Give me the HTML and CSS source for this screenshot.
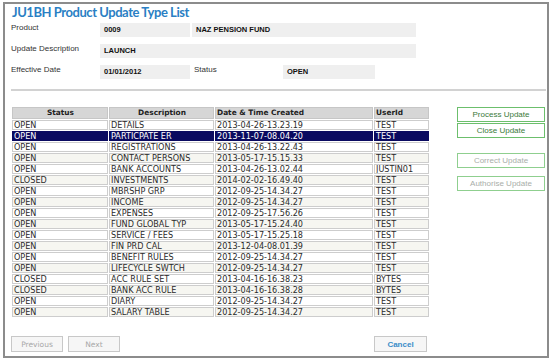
FILE: index.html
```html
<!DOCTYPE html>
<html lang="en">
<head>
    <meta charset="UTF-8">
    <meta name="viewport" content="width=device-width, initial-scale=1.0">
    <title>JU1BH Product Update Type List</title>
    <link rel="stylesheet" href="styles.css">
</head>
<body>
    <div class="frame">
        <h1 class="title">JU1BH Product Update Type List</h1>

        <div class="fields">
            <div class="row">
                <span class="label">Product</span>
                <span class="value short">0009</span>
                <span class="value long">NAZ PENSION FUND</span>
            </div>
            <div class="row">
                <span class="label">Update Description</span>
                <span class="value wide">LAUNCH</span>
            </div>
            <div class="row">
                <span class="label">Effective Date</span>
                <span class="value short">01/01/2012</span>
                <span class="label second">Status</span>
                <span class="value status">OPEN</span>
            </div>
        </div>

        <div class="rule"></div>

        <div class="main">
            <table class="list">
                <colgroup>
                    <col class="c-status">
                    <col class="c-desc">
                    <col class="c-date">
                    <col class="c-user">
                </colgroup>
                <thead>
                    <tr>
                        <th class="center">Status</th>
                        <th class="center">Description</th>
                        <th>Date &amp; Time Created</th>
                        <th>UserId</th>
                    </tr>
                </thead>
                <tbody id="rows"></tbody>
            </table>

            <div class="actions">
                <button class="act process">Process Update</button>
                <button class="act close">Close Update</button>
                <button class="act correct" disabled>Correct Update</button>
                <button class="act authorise" disabled>Authorise Update</button>
            </div>
        </div>

        <div class="footer">
            <button class="nav" disabled>Previous</button>
            <button class="nav next" disabled>Next</button>
            <button class="nav cancel">Cancel</button>
        </div>
    </div>

    <script>
        const rows = [
            ['OPEN', 'DETAILS', '2013-04-26-13.23.19', 'TEST'],
            ['OPEN', 'PARTICPATE ER', '2013-11-07-08.04.20', 'TEST'],
            ['OPEN', 'REGISTRATIONS', '2013-04-26-13.22.43', 'TEST'],
            ['OPEN', 'CONTACT PERSONS', '2013-05-17-15.15.33', 'TEST'],
            ['OPEN', 'BANK ACCOUNTS', '2013-04-26-13.02.44', 'JUSTIN01'],
            ['CLOSED', 'INVESTMENTS', '2014-02-02-16.49.40', 'TEST'],
            ['OPEN', 'MBRSHP GRP', '2012-09-25-14.34.27', 'TEST'],
            ['OPEN', 'INCOME', '2012-09-25-14.34.27', 'TEST'],
            ['OPEN', 'EXPENSES', '2012-09-25-17.56.26', 'TEST'],
            ['OPEN', 'FUND GLOBAL TYP', '2013-05-17-15.24.40', 'TEST'],
            ['OPEN', 'SERVICE / FEES', '2013-05-17-15.25.18', 'TEST'],
            ['OPEN', 'FIN PRD CAL', '2013-12-04-08.01.39', 'TEST'],
            ['OPEN', 'BENEFIT RULES', '2012-09-25-14.34.27', 'TEST'],
            ['OPEN', 'LIFECYCLE SWTCH', '2012-09-25-14.34.27', 'TEST'],
            ['CLOSED', 'ACC RULE SET', '2013-04-16-16.38.23', 'BYTES'],
            ['CLOSED', 'BANK ACC RULE', '2013-04-16-16.38.28', 'BYTES'],
            ['OPEN', 'DIARY', '2012-09-25-14.34.27', 'TEST'],
            ['OPEN', 'SALARY TABLE', '2012-09-25-14.34.27', 'TEST']
        ];
        const selected = 1;

        const body = document.getElementById('rows');
        rows.forEach((r, i) => {
            const tr = document.createElement('tr');
            if (i === selected) tr.className = 'selected';
            r.forEach(v => {
                const td = document.createElement('td');
                td.innerText = v;
                tr.appendChild(td);
            });
            body.appendChild(tr);
        });
    </script>
</body>
</html>
```

FILE: styles.css
```css
body {
    margin: 0;
    background: #fff;
    font-family: "Liberation Sans", Arial, sans-serif;
    color: #222;
}
.frame {
    box-sizing: border-box;
    width: 546px;
    height: 356px;
    margin: 2px 0 0 3px;
    padding: 0 1px 0 6px;
    border: 2px solid #8c8c8c;
}
.title {
    margin: 0 0 2px 1px;
    font-family: Lato, "Open Sans", sans-serif;
    font-size: 13px;
    font-weight: bold;
    letter-spacing: -0.45px;
    line-height: 17px;
    color: #2a7fc4;
}
.fields {
    display: flex;
    flex-direction: column;
    gap: 7px;
}
.row {
    display: flex;
    height: 14px;
}
.label {
    width: 89px;
    font-size: 8px;
    line-height: 10px;
    color: #333;
}
.label.second {
    margin-left: 4px;
}
.value {
    box-sizing: border-box;
    height: 14px;
    padding-left: 4px;
    background: #efefef;
    font-size: 7.5px;
    font-weight: bold;
    line-height: 14px;
    color: #111;
}
.value.short { width: 90px; }
.value.long { width: 224px; margin-left: 2px; }
.value.wide { width: 316px; }
.value.status { width: 92px; }
.rule {
    height: 2px;
    margin-top: 10px;
    background: #d2d2d2;
}
.main {
    display: flex;
    align-items: flex-start;
    margin-top: 15px;
}
.list {
    width: 414px;
    table-layout: fixed;
    border-collapse: separate;
    border-spacing: 1px;
    font-family: "DejaVu Sans", Verdana, sans-serif;
    font-size: 8.1px;
}
.c-status { width: 96px; }
.c-desc { width: 105px; }
.c-date { width: 158px; }
.c-user { width: 55px; }
.list th,
.list td {
    padding: 0 0 0 1px;
    border: 1px solid #cdcdcd;
    text-align: left;
    white-space: nowrap;
    overflow: hidden;
}
.list th {
    height: 10px;
    line-height: 10px;
    background: #d6d6d6;
    border-color: #c6c6c6;
    font-size: 7.4px;
    font-weight: bold;
    color: #222;
}
.list th.center {
    text-align: center;
}
.list td {
    height: 8px;
    line-height: 8px;
    color: #2a2a2a;
}
.list tbody tr:nth-child(even) td {
    background: #f6f6f1;
}
.list tbody tr.selected td {
    background: #0a0a60;
    border-color: #0a0a60;
    color: #fff;
}
.actions {
    display: flex;
    flex-direction: column;
    margin-left: 27px;
    padding-top: 1px;
}
.act {
    box-sizing: border-box;
    width: 88px;
    height: 15px;
    padding: 0;
    border: 1px solid #6cbf6c;
    background: #fff;
    font-family: "Liberation Sans", Arial, sans-serif;
    font-size: 8px;
    color: #3a7a3a;
}
.act:disabled {
    border-color: #8fcf8f;
    color: #a9aea9;
}
.close { margin-top: 1px; }
.correct { margin-top: 15px; }
.authorise { margin-top: 8px; }
.footer {
    display: flex;
    margin-top: 18px;
}
.nav {
    box-sizing: border-box;
    width: 52px;
    height: 16px;
    padding: 0;
    border: 1px solid #c8c8c8;
    background: #f6f6f6;
    font-family: "DejaVu Sans", Verdana, sans-serif;
    font-size: 7.5px;
    color: #a8a8a8;
}
.next { margin-left: 5px; }
.cancel {
    width: 53px;
    margin-left: 254px;
    font-family: "Liberation Sans", Arial, sans-serif;
    font-size: 8px;
    font-weight: bold;
    color: #3a8cc8;
}
```
